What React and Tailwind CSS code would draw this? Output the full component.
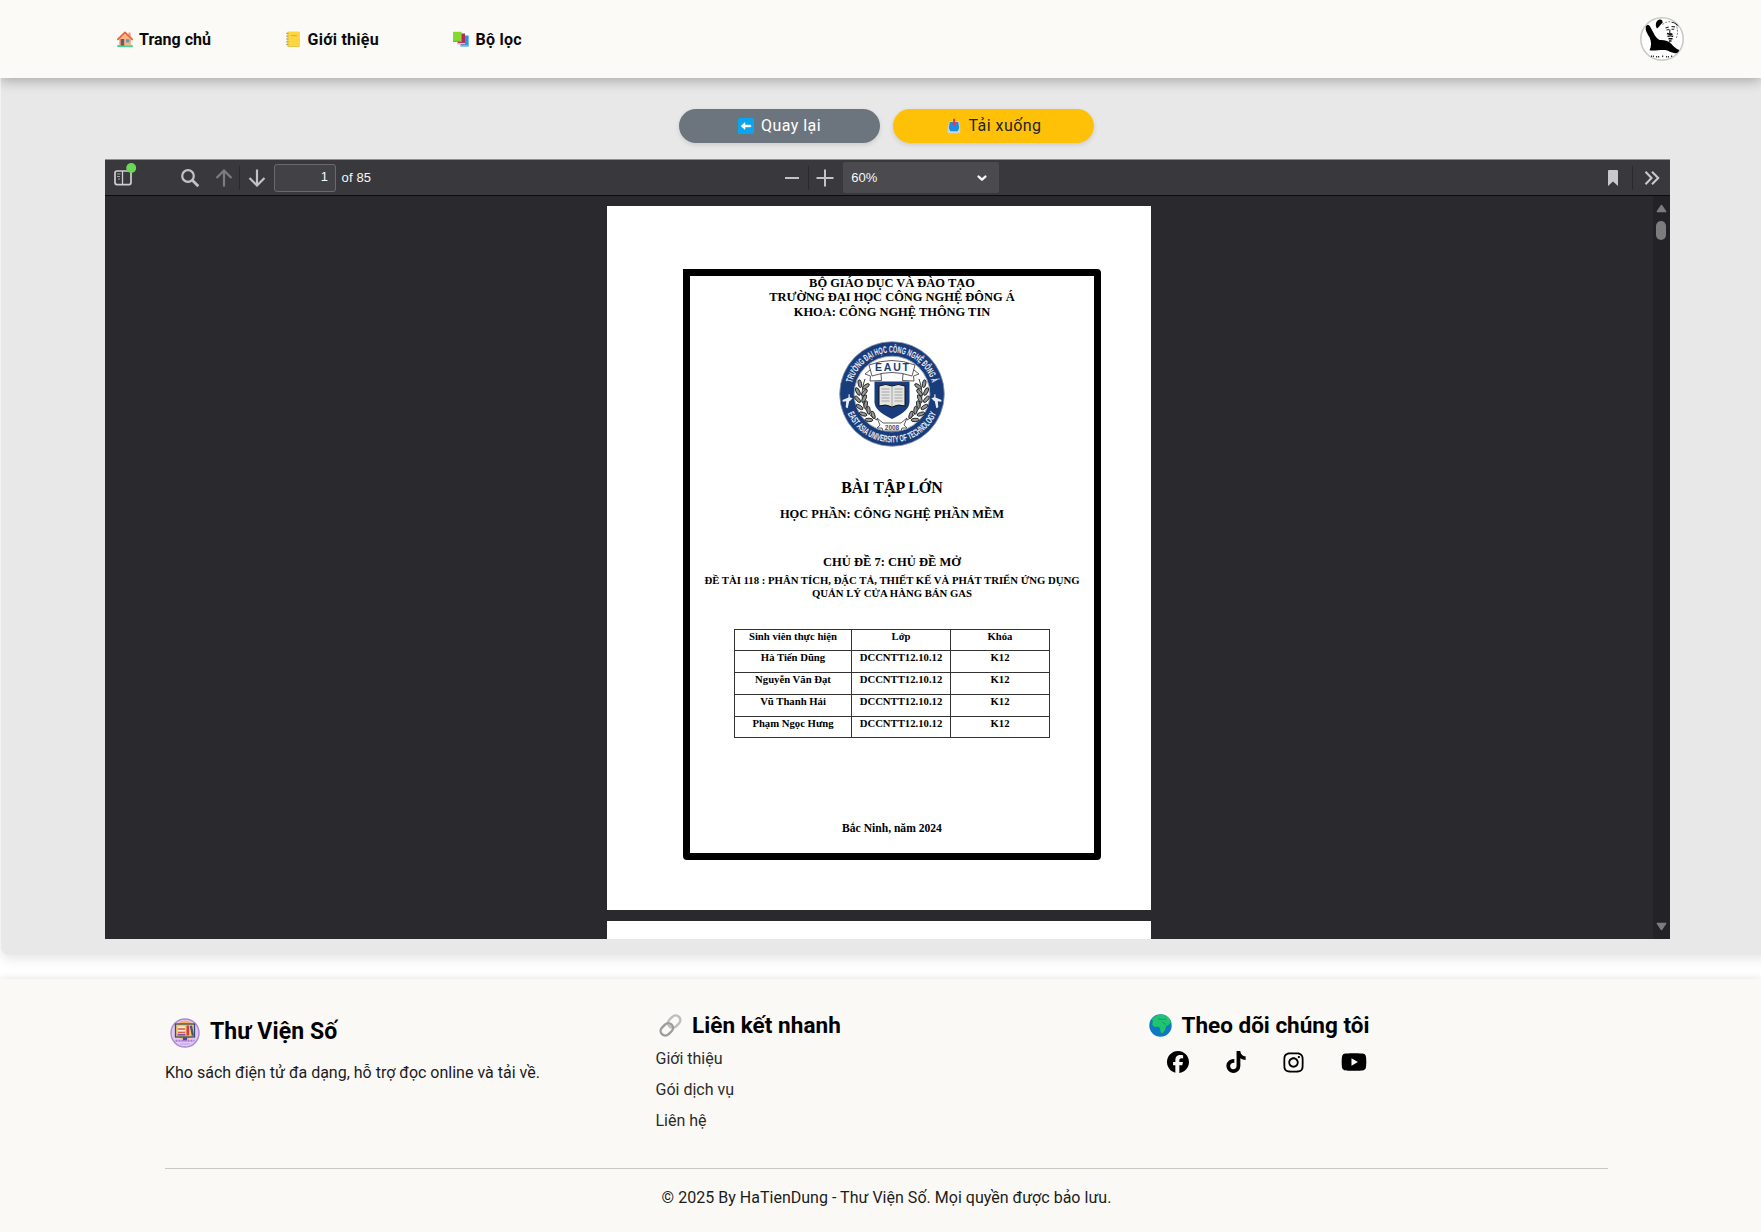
import { FaFacebook, FaTiktok, FaInstagram, FaYoutube } from "react-icons/fa6";

function HouseIcon() {
  return (
    <svg viewBox="0 0 16 16" className="size-4">
      <rect x="0" y="14" width="16" height="2" rx="1" fill="#43d68c" />
      <path d="M2 8 8 2.4 14 8v6.6H2z" fill="#fbb584" />
      <path d="M11.4 1.6h2.2v4h-2.2z" fill="#f3a06b" />
      <path d="M.8 8.4 8 1.4l7.2 7" fill="none" stroke="#e8603f" strokeWidth="1.7" strokeLinejoin="round" strokeLinecap="round" />
      <rect x="3.6" y="8" width="3.6" height="6.6" fill="#6e5a63" />
      <rect x="9" y="8.2" width="3.4" height="3.2" fill="#5a9fb8" />
    </svg>
  );
}

function LedgerIcon() {
  return (
    <svg viewBox="0 0 16 16" className="size-4">
      <rect x="2" y=".4" width="13" height="15.2" rx="1.2" fill="#fcd53f" />
      <path d="M2.8 15.5h11.4" stroke="#e6b93a" strokeWidth=".8" />
      <path d="M6 4.6h6" stroke="#f3a92c" strokeWidth="1.1" />
      <path d="M1 2.4h2.6M1 5.2h2.6M1 8h2.6M1 10.8h2.6M1 13.4h2.6" stroke="#a89a72" strokeWidth=".9" />
    </svg>
  );
}

function BooksIcon() {
  return (
    <svg viewBox="0 0 16 16" className="size-4">
      <path d="M9 4.6h6.6v10.8H7.4z" fill="#2f95dc" />
      <path d="M7.8 15.6h7.8v-1.4H8z" fill="#7cc4f0" />
      <path d="M5 2.6h7v10.6H4.6z" fill="#b32a55" />
      <path d="M4.6 13.2H12v-1.3H4.6z" fill="#d9c2cd" />
      <path d="M0 .8h8.6v10H0z" fill="#86d92f" />
      <path d="M0 10.800h8.600V9.800H0z" fill="#62b52a" />
    </svg>
  );
}

function BackIcon() {
  return (
    <svg viewBox="0 0 16 16" className="size-4">
      <rect width="16" height="16" rx="1.500" fill="#0aa5ee" />
      <path d="M3 8l4-3.400v2.500h5.800v1.800H7v2.500z" fill="#fff" stroke="#fff" strokeWidth=".5" strokeLinejoin="round" />
    </svg>
  );
}

function InboxIcon() {
  return (
    <svg viewBox="0 0 16 16" className="size-4">
      <path d="M3 3.200h10L14.200 10v4.200a1 1 0 0 1-1 1H2.800a1 1 0 0 1-1-1V10z" fill="#cdd6dc" />
      <path d="M3.800 4h8.400l1 6-1.500 3.200H4.300L2.800 10z" fill="#1a8fe0" />
      <path d="M7 .8h2.200v4h1.900L8.100 8.300 5.100 4.800H7z" fill="#f0325c" />
    </svg>
  );
}

function LinkIcon() {
  return (
    <svg viewBox="0 0 23 23" className="size-[23px]" fill="none">
      <rect x="8.400" y="2.900" width="13.600" height="9.400" rx="4.700" transform="rotate(-45 15.200 7.600)" stroke="#bdbdbd" strokeWidth="2.400" />
      <rect x="1" y="10.700" width="13.600" height="9.400" rx="4.700" transform="rotate(-45 7.800 15.400)" stroke="#9c9c9c" strokeWidth="2.400" />
    </svg>
  );
}

function GlobeIcon() {
  return (
    <svg viewBox="0 0 23 23" className="size-[23px]">
      <circle cx="11.500" cy="11.500" r="11.200" fill="#0f78c2" />
      <path d="M3 4.800C6 1.500 10 .2 13.500.6c3 .5 6 2.600 7.500 5.200l.8 2.700-2.600 3-2 .6-1 3.700-2.700 3.400-1.700-.7-.9-4.200-1.300-1.500-4.100.2-2.300-2.200L3.800 7z" fill="#1fc46d" />
      <path d="M9 4.800l4.500.7 3.800-.5M13 8l4 2.500" stroke="#0b9f7f" strokeWidth="1" fill="none" />
    </svg>
  );
}

function LibraryLogo() {
  return (
    <svg viewBox="0 0 30 30" className="size-[30px]">
      <circle cx="15" cy="15" r="14" fill="#e3c8f2" stroke="#a68bd6" strokeWidth="1.400" />
      <circle cx="15" cy="12" r="9.500" fill="#f5b068" />
      <rect x="5.500" y="6" width="19" height="13" fill="#f4c95d" stroke="#3d4a63" strokeWidth="1.300" />
      <path d="M8 9.500h7M8 12.500h7" stroke="#f7efe6" strokeWidth="1.800" />
      <path d="M8 11h7M8 14.300h7" stroke="#d95a4e" strokeWidth="1.300" />
      <path d="M16.500 7.500h2.600v10h-2.600z" fill="#cf3d4b" />
      <path d="M19.800 8l2.200-.5 2 10-2.200.4z" fill="#44518c" />
      <path d="M7.500 16.800h8" stroke="#7b4fa0" strokeWidth="1.500" />
      <path d="M13 19.500h4v3h-4z" fill="#3246a8" />
      <path d="M5.500 22.800h19" stroke="#a678cf" strokeWidth="2" strokeDasharray="2 1" />
      <path d="M10 26h10" stroke="#c69be3" strokeWidth="1" />
    </svg>
  );
}

function Avatar() {
  return (
    <svg viewBox="0 0 44 44" className="size-11">
      <circle cx="22" cy="22" r="21.200" fill="#fff" stroke="#c9c9c9" strokeWidth="1.600" />
      <path d="M5.800 9.500C7 7.200 9 7.500 10.200 9.800l3.500 6.500c1.500 3 3.300 5.500 5.800 6.700 5-.3 9.500 1 12 4 2.300 2.800 4.500 4.800 7.700 6-.8 2.800-2.500 3.600-5.200 3-3.800-.6-5.500-2.600-9-3-5-.5-9.500 1-15.500.3 2-4 2-8 .3-12.500C7.800 17.500 5 13.500 5.800 9.500z" fill="#000" />
      <path d="M17 11.500c-2.300-3.500-1-8.300 2.500-9 2.200-.3 3.500 1 3 3.400-1.700 1-2.700 3.400-5.500 5.600z" fill="#000" />
      <path d="M31.500 4.800c3 .3 5.700 2 7 4.500l-2-1c-1-1.500-2.500-2.300-4.800-2.600z" fill="#111" />
      <path d="M25.500 11l3.200-1M31.500 9.500l3.500.4M26.500 13l2.500-.5M31.500 12.300h2.700M29.800 12.500v4l2 .3" stroke="#222" strokeWidth="1.100" fill="none" />
      <path d="M27 16.500l2.500.7h3M27.500 19.500c2-.9 4-.8 5.700 0M28.500 21.700h4M29 24h2.500" stroke="#111" strokeWidth="1.400" fill="none" />
      <path d="M36.800 9.500c1.200 4 1 8-.5 11.500M22.500 7.500c3-2.500 6-3 8.500-2.700" stroke="#666" strokeWidth=".8" strokeDasharray="2 1.200" fill="none" />
      <path d="M11 39.300h3M16 39.700h4M22 39.200h2M26 39.700h3M31 39.300h1.500" stroke="#333" strokeWidth="1.600" strokeDasharray="1.200 .8" />
    </svg>
  );
}

function Laurel() {
  const leaves = [
    [-29, -10, 20], [-31, -3, 5], [-31.500, 4, -10], [-30, 11, -25], [-27, 17.500, -40], [-22, 23, -55],
  ];
  return (
    <g>
      <path d="M-27-15C-33 2-30 18-15 26" fill="none" stroke="#222" strokeWidth=".9" />
      {leaves.map(([x, y, r]) => (
        <g key={y} transform={`translate(${x} ${y}) rotate(${r})`} fill="#8f9694" stroke="#222" strokeWidth=".9">
          <ellipse cx="-3" cy="-1" rx="1.700" ry="4" transform="rotate(-32)" />
          <ellipse cx="3.600" cy="-1" rx="1.700" ry="4" transform="rotate(35)" />
        </g>
      ))}
    </g>
  );
}

function Seal() {
  return (
    <svg viewBox="-53 -53 106 106" className="size-[106px]">
      <defs>
        <path id="arcTop" d="M-41.500 0A41.500 41.500 0 0 1 41.500 0" />
        <path id="arcBottom" d="M-48.500 0A48.500 48.500 0 0 0 48.500 0" />
      </defs>
      <circle r="52.300" fill="#193d7c" stroke="#8d97a8" strokeWidth=".8" />
      <circle r="37.800" fill="#fff" stroke="#9fa9b8" strokeWidth="1" />
      <g fill="#e9eef6" fontFamily="'Liberation Sans Narrow','Liberation Sans',sans-serif" fontWeight="700">
        <text textAnchor="middle" fontSize="9.500">
          <textPath href="#arcTop" startOffset="50%" textLength="108" lengthAdjust="spacingAndGlyphs">TRƯỜNG ĐẠI HỌC CÔNG NGHỆ ĐÔNG Á</textPath>
        </text>
        <text textAnchor="middle" fontSize="9.500">
          <textPath href="#arcBottom" startOffset="50%" textLength="112" lengthAdjust="spacingAndGlyphs">EAST ASIA UNIVERSITY OF TECHNOLOGY</textPath>
        </text>
      </g>
      <g fill="#e9eef6">
        <path d="M-49.500 6l6-2.500v-3l1.200-.2v3l3 1-2.500 2.500-1 .5-1.500 7-2-1 .5-6-3.500.5z" />
        <path d="M49.500 6l-6-2.500v-3l-1.200-.2v3l-3 1 2.500 2.500 1 .5 1.500 7 2-1-.5-6 3.500.5z" />
      </g>
      <Laurel />
      <g transform="scale(-1 1)"><Laurel /></g>
      <path d="M-22-24-27-20-21.500-18-22-13-10.500-13.500-11-20zM22-24 27-20 21.500-18 22-13 10.500-13.500 11-20z" fill="#fff" stroke="#333" strokeWidth=".8" />
      <path d="M-23-29Q0-38 23-29L20-18Q0-25-20-18z" fill="#fff" stroke="#333" strokeWidth=".8" />
      <text y="-23.500" textAnchor="middle" fontFamily="'Liberation Sans',sans-serif" fontWeight="700" fontSize="10.500" textLength="34" fill="#193d7c">EAUT</text>
      <path d="M-17.500-12.500h35V8C17.500 16 8 21 0 25-8 21-17.500 16-17.500 8z" fill="#193d7c" />
      <path d="M-13-8Q-6-11 0-8 6-11 13-8V12Q6 9.500 0 13-6 9.500-13 12z" fill="#e4e4e0" stroke="#111" strokeWidth="1" />
      <path d="M0-8v21M-10.500-5h8M-10.500-2h8M-10.500 1h8M-10.500 4h8M-10.500 7h8M2.500-5h8M2.500-2h8M2.500 1h8M2.500 4h8M2.500 7h8" stroke="#8a8a8a" strokeWidth=".7" />
      <path d="M-15 24l3 7-3 3h5l1 3 18 0 1-3h5l-3-3 3-7-6 5h-18z" fill="#fff" stroke="#333" strokeWidth=".8" />
      <text y="36" textAnchor="middle" fontFamily="'Liberation Sans',sans-serif" fontWeight="700" fontSize="6.500" fill="#3c4f80">2008</text>
    </svg>
  );
}

const navItems = [
  { label: "Trang chủ", icon: <HouseIcon />, width: "w-[168.500px]" },
  { label: "Giới thiệu", icon: <LedgerIcon />, width: "w-[168px] tracking-[0.250px]" },
  { label: "Bộ lọc", icon: <BooksIcon />, width: "w-[100px] tracking-[0.250px]" },
];

function Header() {
  return (
    <header className="relative z-10 flex h-[78px] items-center justify-between bg-[#fbfaf6] pr-[77px] pl-[116.500px] shadow-[0_3px_12px_rgba(0,0,0,0.28)]">
      <nav className="flex">
        {navItems.map((item) => (
          <a key={item.label} className={`flex items-center gap-[6.500px] text-base leading-6 font-bold text-[#0b0b0b] ${item.width}`}>
            {item.icon}
            <span className="pt-px whitespace-nowrap">{item.label}</span>
          </a>
        ))}
      </nav>
      <Avatar />
    </header>
  );
}

function Toolbar() {
  return (
    <div className="flex h-[37px] items-center border-t border-b border-t-[#8f8f92] border-b-[#0c0c0d] bg-[#38383d] text-[#f9f9fa]">
      <svg viewBox="0 0 24 24" className="ml-[7px] size-6 shrink-0 overflow-visible" fill="none">
        <rect x="3" y="5" width="16" height="13.600" rx="2" stroke="#cfcfd1" strokeWidth="1.700" />
        <path d="M10.500 5v13.500" stroke="#cfcfd1" strokeWidth="1.300" />
        <path d="M5 8h3.500M5 10.500h3M6 13h2" stroke="#a5a5a8" strokeWidth="1.200" />
        <circle cx="19.200" cy="2" r="5" fill="#6cd755" />
      </svg>
      <svg viewBox="0 0 20 20" className="ml-[44px] size-5 shrink-0" fill="none" stroke="#c3c3c5" strokeWidth="2.200">
        <circle cx="8" cy="8" r="5.800" />
        <path d="M12.300 12.300l6 6" strokeWidth="2.800" />
      </svg>
      <svg viewBox="0 0 18 18" className="ml-[15px] size-[18px] shrink-0" fill="none" stroke="#7d7d80" strokeWidth="2.200">
        <path d="M9 17.500V2M1.500 9 9 1.500 16.500 9" />
      </svg>
      <span className="ml-[6px] h-6 w-px bg-[#29292d]" />
      <svg viewBox="0 0 18 18" className="ml-[8px] size-[18px] shrink-0" fill="none" stroke="#c3c3c5" strokeWidth="2.200">
        <path d="M9 .5V16M1.500 9 9 16.500 16.500 9" />
      </svg>
      <div className="ml-[8px] flex h-7 w-[62px] items-center justify-end rounded-[3px] border border-[#6a6a6e] bg-[#414146] pr-[7px] pb-px font-['Liberation_Sans',sans-serif] text-[13px]">1</div>
      <span className="ml-[5.500px] font-['Liberation_Sans',sans-serif] text-[13px] tracking-[0.150px] whitespace-nowrap">of 85</span>
      <svg viewBox="0 0 18 18" className="ml-[412px] size-[18px] shrink-0" stroke="#c3c3c5" strokeWidth="2">
        <path d="M2 9h14" />
      </svg>
      <span className="ml-[7px] h-6 w-px bg-[#29292d]" />
      <svg viewBox="0 0 18 18" className="ml-[7px] size-[18px] shrink-0" stroke="#c3c3c5" strokeWidth="2">
        <path d="M.5 9h17M9 .5v17" />
      </svg>
      <div className="ml-[9px] flex h-[31px] w-[156px] items-center justify-between rounded-[2px] bg-[#4a4a4f] pr-[11px] pl-[8px] font-['Liberation_Sans',sans-serif] text-[13px]">
        <span>60%</span>
        <svg viewBox="0 0 12 8" className="h-2 w-3" fill="none" stroke="#f9f9fa" strokeWidth="2.400" strokeLinecap="round" strokeLinejoin="round">
          <path d="M2.600 2.600 6 5.600 9.400 2.600" />
        </svg>
      </div>
      <svg viewBox="0 0 10 16" className="ml-auto h-4 w-[10px] shrink-0" fill="#c9c9cb">
        <path d="M1 0h8a1 1 0 0 1 1 1v15l-5-4.500L0 16V1a1 1 0 0 1 1-1z" />
      </svg>
      <span className="ml-[14px] h-6 w-px bg-[#29292d]" />
      <svg viewBox="0 0 16 14" className="mr-[10px] ml-[11px] h-[14px] w-4 shrink-0" fill="none" stroke="#c9c9cb" strokeWidth="2.100">
        <path d="M1.500 .8 7.500 7l-6 6.200M8 .8 14.200 7 8 13.200" />
      </svg>
    </div>
  );
}

const students = ["Hà Tiến Dũng", "Nguyễn Văn Đạt", "Vũ Thanh Hải", "Phạm Ngọc Hưng"];

function CoverPage() {
  return (
    <div className="h-[704px] w-[544px] shrink-0 bg-white pt-[63px] pl-[76px] font-['Liberation_Serif',serif] font-bold text-black">
      <div className="flex h-[591px] w-[418px] flex-col items-center rounded-[4px] rounded-tl-none border-7 border-black text-center whitespace-nowrap">
        <div className="text-[12.450px] leading-[14.400px]">
          <p>BỘ GIÁO DỤC VÀ ĐÀO TẠO</p>
          <p>TRƯỜNG ĐẠI HỌC CÔNG NGHỆ ĐÔNG Á</p>
          <p>KHOA: CÔNG NGHỆ THÔNG TIN</p>
        </div>
        <div className="mt-[21.500px]"><Seal /></div>
        <p className="mt-[31.500px] text-[15.950px] leading-5">BÀI TẬP LỚN</p>
        <p className="mt-[7.500px] text-[12.450px] leading-4">HỌC PHẦN: CÔNG NGHỆ PHẦN MỀM</p>
        <p className="mt-8 text-[12.500px] leading-4">CHỦ ĐỀ 7: CHỦ ĐỀ MỞ</p>
        <div className="mt-[4px] text-[10.720px] leading-[13px]">
          <p>ĐỀ TÀI 118 : PHÂN TÍCH, ĐẶC TẢ, THIẾT KẾ VÀ PHÁT TRIỂN ỨNG DỤNG</p>
          <p>QUẢN LÝ CỬA HÀNG BÁN GAS</p>
        </div>
        <div className="mt-[29px] grid w-[316px] grid-cols-[117px_99px_99px] border-t border-l border-[#333] text-[10.700px] leading-[13px]">
          {["Sinh viên thực hiện", "Lớp", "Khóa"].map((h) => (
            <div key={h} className="h-[21.750px] border-r border-b border-[#333]">{h}</div>
          ))}
          {students.map((name) => [
            <div key={name} className="h-[21.750px] border-r border-b border-[#333]">{name}</div>,
            <div key={name + "c"} className="h-[21.750px] border-r border-b border-[#333]">DCCNTT12.10.12</div>,
            <div key={name + "k"} className="h-[21.750px] border-r border-b border-[#333]">K12</div>,
          ])}
        </div>
        <p className="mt-[83.500px] text-[11.600px] leading-[13px]">Bắc Ninh, năm 2024</p>
      </div>
    </div>
  );
}

function Viewer() {
  return (
    <div className="mt-4 ml-[92px] flex h-[780px] w-[1565px] flex-col bg-[#2a2a2e]">
      <Toolbar />
      <div className="flex min-h-0 flex-1">
        <div className="flex flex-1 flex-col items-start gap-[11px] overflow-hidden pt-[10px] pl-[502px]">
          <CoverPage />
          <div className="h-[704px] w-[544px] shrink-0 bg-white" />
        </div>
        <div className="flex w-[17px] flex-col items-center bg-[#232327] pt-[8px] pb-[8px]">
          <svg viewBox="0 0 11 9" className="h-[9px] w-[11px]" fill="#7c7c7e" stroke="#7c7c7e" strokeWidth="1.500" strokeLinejoin="round"><path d="M5.500 1.500 9.700 7.600H1.300z" /></svg>
          <div className="mt-[8px] mr-px h-[19px] w-[10px] rounded-full bg-[#7c7c7e]" />
          <svg viewBox="0 0 11 9" className="mt-auto h-[9px] w-[11px]" fill="#7c7c7e" stroke="#7c7c7e" strokeWidth="1.500" strokeLinejoin="round"><path d="M5.500 7.500 9.700 1.400H1.300z" /></svg>
        </div>
      </div>
    </div>
  );
}

function Footer() {
  return (
    <footer className="mt-6 h-[253px] bg-[#fbf9f6] pr-[153px] pl-[165px] text-[#1c1c1c] shadow-[0_-2px_6px_rgba(0,0,0,0.08)]">
      <div className="flex h-[189px] pt-[34px]">
        <div className="w-[490.500px]">
          <div className="mt-[4px] ml-[5px] flex h-[31px] items-center gap-[10px]">
            <LibraryLogo />
            <h3 className="-mt-[2px] text-[23px] leading-7 font-bold tracking-[0.120px] text-black">Thư Viện Số</h3>
          </div>
          <p className="mt-[13px] text-base leading-6">Kho sách điện tử đa dạng, hỗ trợ đọc online và tải về.</p>
        </div>
        <div className="w-[493px]">
          <div className="ml-[3.500px] flex items-center gap-[10px]">
            <LinkIcon />
            <h3 className="text-[22.500px] leading-6 font-bold tracking-[0.050px] text-black">Liên kết nhanh</h3>
          </div>
          <ul className="mt-[6px] text-base leading-[31px] text-[#2b2b2b]">
            <li>Giới thiệu</li>
            <li>Gói dịch vụ</li>
            <li>Liên hệ</li>
          </ul>
        </div>
        <div>
          <div className="flex items-center gap-[10px]">
            <GlobeIcon />
            <h3 className="text-[22.500px] leading-6 font-bold text-black">Theo dõi chúng tôi</h3>
          </div>
          <div className="mt-[13px] ml-[18.500px] flex h-6 items-center text-black">
            <FaFacebook className="size-[22px]" />
            <FaTiktok className="ml-[36px] size-[22px]" />
            <FaInstagram className="ml-[35px] size-[23px]" />
            <FaYoutube className="ml-[35.500px] size-[26px]" />
          </div>
        </div>
      </div>
      <div className="border-t border-[#c9c8c4] pt-[17px] text-center text-base leading-6 tracking-[0.020px]">
        © 2025 By HaTienDung - Thư Viện Số. Mọi quyền được bảo lưu.
      </div>
    </footer>
  );
}

export default function App() {
  return (
    <div className="h-[1232px] w-[1761px] overflow-hidden bg-white font-[Roboto,sans-serif]">
      <Header />
      <main className="-mr-3 ml-px h-[877px] rounded-b-lg bg-[#e8e8e8] pt-[30.500px] pl-[12px] shadow-[0_4px_12px_rgba(0,0,0,0.1)]">
        <div className="flex h-[34.500px] justify-center gap-[13px] pr-[13px] text-base tracking-[0.450px]">
          <button className="flex w-[201px] items-center justify-center gap-[7px] rounded-full bg-[#6c757d] text-white shadow-[0_2px_5px_rgba(0,0,0,0.12)]"><BackIcon />Quay lại</button>
          <button className="flex w-[201px] items-center justify-center gap-[7px] rounded-full bg-[#ffc107] text-[#212529] shadow-[0_2px_5px_rgba(0,0,0,0.12)]"><InboxIcon />Tải xuống</button>
        </div>
        <Viewer />
      </main>
      <Footer />
    </div>
  );
}
